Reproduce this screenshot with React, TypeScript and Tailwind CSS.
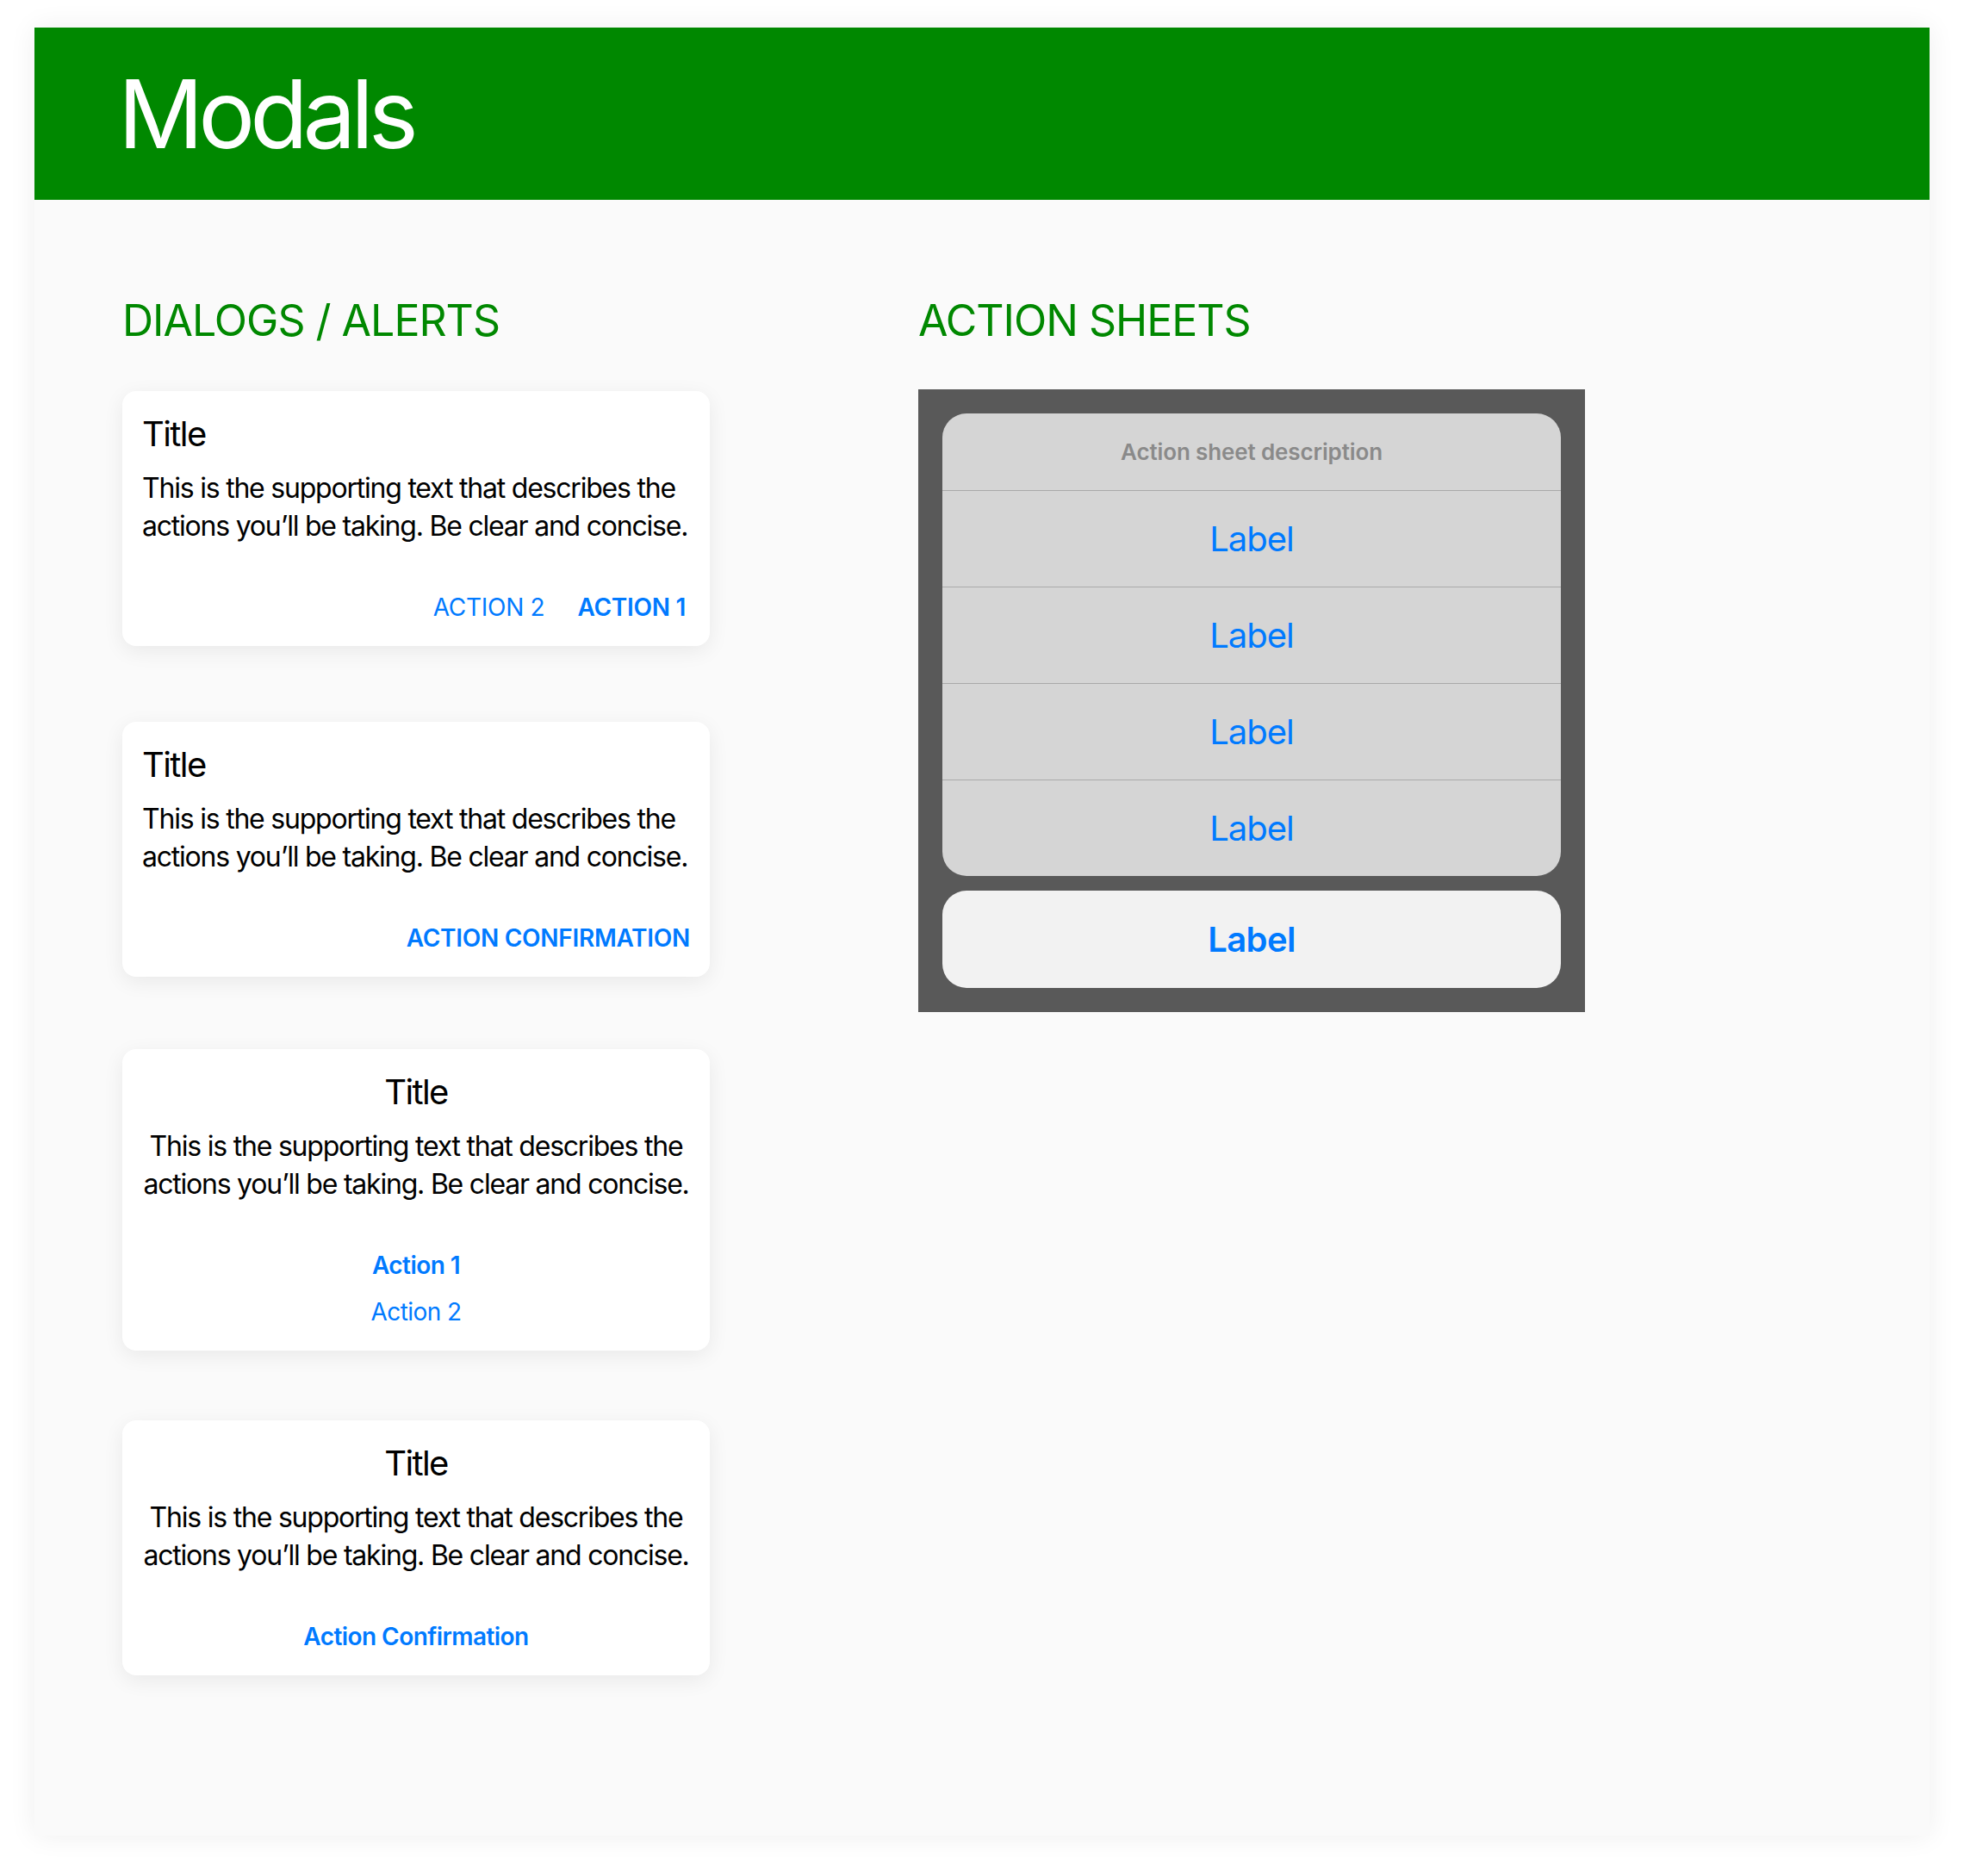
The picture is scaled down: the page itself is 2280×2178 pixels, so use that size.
import React from "react";

const font = { fontFamily: "Inter, 'Noto Sans', sans-serif" };

type Action = { label: string; strong?: boolean };

function Dialog({
  centered,
  actions,
  className,
  actionsClassName,
}: {
  centered?: boolean;
  actions: Action[];
  className?: string;
  actionsClassName?: string;
}) {
  return (
    <div
      className={`rounded-[16px] bg-white px-[23px] pt-[26px] pb-[28px] shadow-[0_6px_24px_rgba(0,0,0,0.07)] ${
        centered ? "text-center" : ""
      } ${className ?? ""}`}
    >
      <h3 className="text-[40px] leading-[48px] font-normal tracking-[-0.04em] text-black">Title</h3>
      <p className="mt-[17px] text-[32px] leading-[44px] tracking-[-0.038em] text-black whitespace-nowrap">
        This is the supporting text that describes the
        <br />
        actions you’ll be taking. Be clear and concise.
      </p>
      {centered ? (
        <div className="mt-[55px] flex flex-col items-center gap-[20px]">
          {actions.map((a, i) => (
            <button
              key={i}
              className={`text-[28px] leading-[34px] tracking-[-0.02em] text-[#007aff] ${
                a.strong ? "font-semibold" : "font-normal"
              }`}
            >
              {a.label}
            </button>
          ))}
        </div>
      ) : (
        <div className={`mt-[55px] flex justify-end gap-[38px] ${actionsClassName ?? ""}`}>
          {actions.map((a, i) => (
            <button
              key={i}
              className={`text-[28px] leading-[34px] tracking-[-0.01em] text-[#007aff] ${
                a.strong ? "font-semibold" : "font-normal"
              }`}
            >
              {a.label}
            </button>
          ))}
        </div>
      )}
    </div>
  );
}

function ActionSheet() {
  const labels = ["Label", "Label", "Label", "Label"];
  return (
    <div className="w-[774px] bg-[#595959] px-[28px] pt-[28px] pb-[28px]">
      <div className="overflow-hidden rounded-[28px] bg-[#d5d5d5]">
        <div className="flex h-[89px] items-center justify-center text-[26px] font-semibold tracking-[-0.005em] text-[#8a8a8a]">
          Action sheet description
        </div>
        {labels.map((l, i) => (
          <div
            key={i}
            className="flex h-[112px] items-center justify-center border-t border-[#a9a9a9] text-[40px] tracking-[-0.025em] text-[#007aff]"
          >
            {l}
          </div>
        ))}
      </div>
      <div className="mt-[17px] flex h-[113px] items-center justify-center rounded-[28px] bg-[#f2f2f2] text-[40px] font-semibold tracking-[-0.015em] text-[#007aff]">
        Label
      </div>
    </div>
  );
}

export default function App() {
  return (
    <div className="min-h-screen bg-white px-[40px] pt-[32px] pb-[48px]" style={font}>
      <div className="bg-[#fafafa] pb-[186px] shadow-[0_0_30px_rgba(0,0,0,0.07)]">
        <header className="flex h-[200px] items-center bg-[#008800] pl-[97px]">
          <h1 className="text-[110px] leading-none font-normal tracking-[-0.055em] text-white">Modals</h1>
        </header>
        <div className="flex gap-[242px] pt-[110px] pl-[102px]">
          <section className="w-[682px]">
            <h2 className="text-[50px] leading-[60px] font-normal tracking-[-0.02em] text-[#008800]">
              DIALOGS / ALERTS
            </h2>
            <Dialog
              className="mt-[52px]"
              actionsClassName="pr-[5px]"
              actions={[{ label: "ACTION 2" }, { label: "ACTION 1", strong: true }]}
            />
            <Dialog className="mt-[88px]" actions={[{ label: "ACTION CONFIRMATION", strong: true }]} />
            <Dialog
              centered
              className="mt-[84px]"
              actions={[{ label: "Action 1", strong: true }, { label: "Action 2" }]}
            />
            <Dialog centered className="mt-[81px]" actions={[{ label: "Action Confirmation", strong: true }]} />
          </section>
          <section>
            <h2 className="text-[50px] leading-[60px] font-normal tracking-[-0.02em] text-[#008800]">
              ACTION SHEETS
            </h2>
            <div className="mt-[50px]">
              <ActionSheet />
            </div>
          </section>
        </div>
      </div>
    </div>
  );
}
